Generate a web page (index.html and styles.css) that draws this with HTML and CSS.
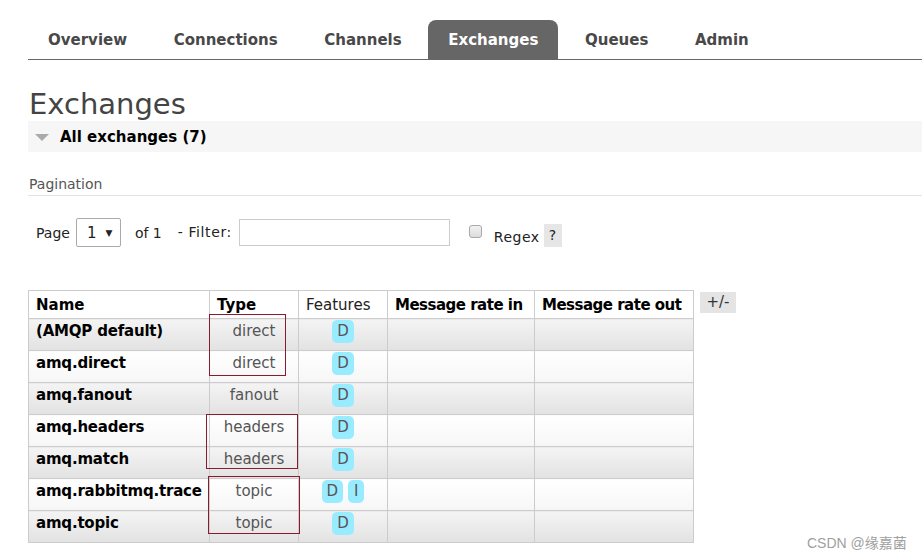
FILE: index.html
```html
<!DOCTYPE html>
<html>
<head>
<meta charset="utf-8">
<link rel="stylesheet" href="styles.css">
</head>
<body>
<div class="page">
  <nav class="tabs">
    <a class="tab">Overview</a>
    <a class="tab">Connections</a>
    <a class="tab">Channels</a>
    <a class="tab active">Exchanges</a>
    <a class="tab">Queues</a>
    <a class="tab">Admin</a>
  </nav>

  <h1 class="title">Exchanges</h1>
  <div class="section-head"><span class="tri"></span><span class="section-title">All exchanges (7)</span></div>

  <div class="pag-label">Pagination</div>
  <div class="pag-row">
    <span class="lbl page-lbl">Page</span>
    <span class="select"><span class="sel-val">1</span><span class="sel-arrow">▼</span></span>
    <span class="lbl of-lbl">of 1</span>
    <span class="lbl filter-lbl">- Filter:</span>
    <input class="filter" type="text">
    <span class="checkbox"></span>
    <span class="lbl regex-lbl">Regex</span>
    <span class="help">?</span>
  </div>

  <div class="table-row">
    <table class="list">
      <colgroup>
        <col class="c-name"><col class="c-type"><col class="c-feat"><col class="c-in"><col class="c-out">
      </colgroup>
      <thead>
        <tr>
          <th>Name</th>
          <th>Type</th>
          <th class="plain">Features</th>
          <th class="tight">Message rate in</th>
          <th class="tight">Message rate out</th>
        </tr>
      </thead>
      <tbody>
        <tr class="odd"><td class="name">(AMQP default)</td><td class="type">direct</td><td class="feat"><span class="badge">D</span></td><td></td><td></td></tr>
        <tr class="even"><td class="name">amq.direct</td><td class="type">direct</td><td class="feat"><span class="badge">D</span></td><td></td><td></td></tr>
        <tr class="odd"><td class="name">amq.fanout</td><td class="type">fanout</td><td class="feat"><span class="badge">D</span></td><td></td><td></td></tr>
        <tr class="even"><td class="name">amq.headers</td><td class="type">headers</td><td class="feat"><span class="badge">D</span></td><td></td><td></td></tr>
        <tr class="odd"><td class="name">amq.match</td><td class="type">headers</td><td class="feat"><span class="badge">D</span></td><td></td><td></td></tr>
        <tr class="even"><td class="name">amq.rabbitmq.trace</td><td class="type">topic</td><td class="feat"><span class="badge">D</span> <span class="badge badge-i">I</span></td><td></td><td></td></tr>
        <tr class="odd"><td class="name">amq.topic</td><td class="type">topic</td><td class="feat"><span class="badge">D</span></td><td></td><td></td></tr>
      </tbody>
    </table>
    <span class="toggle">+/-</span>
  </div>

  <div class="mark mark1"></div>
  <div class="mark mark2"></div>
  <div class="mark mark3"></div>
  <div class="watermark">CSDN @缘嘉菌</div>
</div>
</body>
</html>
```

FILE: styles.css
```css
html, body {
  margin: 0;
  padding: 0;
  background: #fff;
}
body {
  font-family: "DejaVu Sans", Verdana, sans-serif;
  color: #222;
}
.page {
  position: relative;
  width: 922px;
  height: 560px;
  overflow: hidden;
  padding: 20px 0 0 28px;
  box-sizing: border-box;
}

/* tabs */
.tabs {
  display: flex;
  gap: 6.6px;
  border-bottom: 1px solid #666;
  height: 39px;
}
.tab {
  display: block;
  padding: 1px 20px 0;
  height: 38px;
  line-height: 39px;
  font-size: 15px;
  font-weight: bold;
  color: #484848;
  border-radius: 8px 8px 0 0;
}
.tab.active {
  background: #666;
  color: #fff;
}

/* title */
.title {
  margin: 27px 0 0 1px;
  font-size: 29px;
  line-height: 34px;
  font-weight: normal;
  color: #444;
}
.section-head {
  margin-top: 0;
  height: 31px;
  background: #f6f6f6;
  display: flex;
  align-items: center;
}
.tri {
  width: 0;
  height: 0;
  margin: 2px 0 0 7px;
  border-left: 7px solid transparent;
  border-right: 7px solid transparent;
  border-top: 7px solid #aaa;
}
.section-title {
  margin-left: 11px;
  padding-top: 2px;
  font-size: 15px;
  line-height: 29px;
  font-weight: bold;
  color: #000;
}

/* pagination */
.pag-label {
  margin-top: 24px;
  padding: 0 0 2px 1px;
  font-size: 14px;
  line-height: 17px;
  color: #555;
  border-bottom: 1px solid #e2e2e2;
}
.pag-row {
  margin-top: 22px;
  display: flex;
  align-items: center;
  height: 29px;
  padding-left: 8px;
  font-size: 14px;
  color: #222;
}
.lbl {
  line-height: 17px;
}
.page-lbl {
  margin-top: 1px;
}
.select {
  margin-left: 6px;
  width: 45px;
  height: 29px;
  box-sizing: border-box;
  border: 1px solid #aaa;
  border-radius: 2px;
  display: flex;
  align-items: center;
  padding-left: 10px;
}
.sel-val {
  font-size: 15px;
}
.sel-arrow {
  font-size: 9px;
  margin-left: 9px;
  margin-top: 1px;
}
.of-lbl {
  margin-left: 14px;
  margin-top: 1px;
}
.filter-lbl {
  margin-left: 16px;
  margin-top: -1px;
  letter-spacing: 0.6px;
}
.filter {
  margin: 0 0 0 7px;
  width: 211px;
  height: 27px;
  box-sizing: border-box;
  border: 1px solid #ccc;
  padding: 0;
  outline: none;
}
.checkbox {
  margin: -2px 0 0 19px;
  width: 13px;
  height: 13px;
  box-sizing: border-box;
  border: 1px solid #a8a8a8;
  border-radius: 3px;
  background: linear-gradient(#f2f2f2, #dcdcdc);
}
.regex-lbl {
  margin: 9px 0 0 12px;
  letter-spacing: 0.5px;
}
.help {
  margin: 5px 0 0 4px;
  width: 18px;
  height: 23px;
  line-height: 23px;
  text-align: center;
  background: #e6e6e6;
  font-size: 14px;
}

/* table */
.table-row {
  margin-top: 43px;
  display: flex;
  align-items: flex-start;
  gap: 6px;
}
.list {
  border-collapse: collapse;
  table-layout: fixed;
  width: 665px;
  font-size: 15px;
}
.c-name { width: 181px; }
.c-type { width: 89px; }
.c-feat { width: 89px; }
.c-in { width: 147px; }
.c-out { width: 159px; }
.list th, .list td {
  border: 1px solid #ccc;
}
.list th {
  background: #fff;
  text-align: left;
  padding: 5px 4px 4px 7px;
  line-height: 18px;
  font-weight: bold;
  color: #000;
  white-space: nowrap;
}
.list th.plain {
  font-weight: normal;
  color: #222;
}
.list th.tight {
  letter-spacing: -0.5px;
  padding-left: 7px;
}
.list td {
  padding: 1px 4px 7px 7px;
  line-height: 17px;
  vertical-align: baseline;
  white-space: nowrap;
}
tr.odd td {
  background: linear-gradient(#f4f4f4, #e2e2e2);
}
tr.even td {
  background: linear-gradient(#ffffff, #f6f6f6);
}
.list td.name {
  font-weight: bold;
  color: #000;
  letter-spacing: -0.2px;
}
.list td.type {
  text-align: center;
  color: #555;
  padding-left: 4px;
}
.list td.feat {
  text-align: center;
  padding-left: 4px;
}
.badge {
  display: inline-block;
  padding: 3px 5px;
  line-height: 17px;
  background: #99ebff;
  border-radius: 5px;
  color: #555;
}
.badge-i {
  padding: 3px 6px;
}
.toggle {
  margin-top: 2px;
  width: 36px;
  height: 21px;
  line-height: 21px;
  text-align: center;
  background: #e4e4e4;
  font-size: 15px;
  color: #333;
}

/* annotations */
.mark {
  position: absolute;
  border: 1px solid #8a1a2c;
  box-sizing: border-box;
}
.mark1 { left: 209px; top: 314px; width: 77px; height: 62px; }
.mark2 { left: 206px; top: 414px; width: 92px; height: 55px; }
.mark3 { left: 208px; top: 476px; width: 92px; height: 58px; }

.watermark {
  position: absolute;
  left: 807px;
  top: 533px;
  font-family: "Liberation Sans", "Noto Sans CJK SC", sans-serif;
  font-size: 14px;
  line-height: 20px;
  color: #a0a0a0;
}
```
